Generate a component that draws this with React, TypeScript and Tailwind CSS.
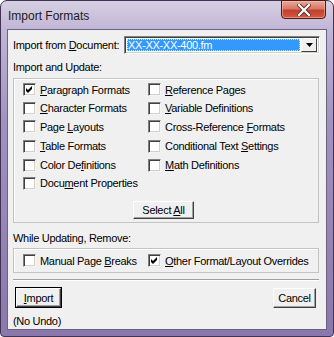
import React from "react";

const Cb = ({ checked = false }: { checked?: boolean }) => (
  <span className="w-[13px] h-[13px] shrink-0 border border-t-[#808080] border-l-[#808080] border-b-[#f4f4f4] border-r-[#f4f4f4] bg-white shadow-[inset_1px_1px_0_#404040,inset_-1px_-1px_0_#d4d0c8] flex items-center justify-center">
    {checked && (
      <svg width="9" height="9" viewBox="0 0 9 9">
        <polygon points="1,3 3,5 7,1 7,4 3,8 1,6" fill="#000" />
      </svg>
    )}
  </span>
);

const U = ({ children }: { children: React.ReactNode }) => <span className="underline underline-offset-[1px]">{children}</span>;

const Row = ({ h, left, right }: { h: string; left: React.ReactNode; right?: React.ReactNode }) => (
  <div className={`flex items-center ${h}`}>
    <div className="w-[125px] flex items-center">{left}</div>
    {right && <div className="flex items-center">{right}</div>}
  </div>
);

const Item = ({ checked, children }: { checked?: boolean; children: React.ReactNode }) => (
  <>
    <Cb checked={checked} />
    <span className="ml-[4px] whitespace-nowrap leading-[12px]">{children}</span>
  </>
);

const Btn = ({ children, className = "" }: { children: React.ReactNode; className?: string }) => (
  <div
    className={`flex items-center justify-center bg-[#f0f0f0] border border-t-white border-l-white border-b-[#404040] border-r-[#404040] shadow-[inset_-1px_-1px_0_#a0a0a0] leading-[12px] ${className}`}
  >
    <span className="whitespace-nowrap">{children}</span>
  </div>
);

export default function App() {
  return (
    <div
      className="w-[334px] h-[337px] rounded-t-[7px] rounded-b-[4px] border border-[#3f3456] bg-[linear-gradient(180deg,#d7d0e2_0px,#c2b6d6_28px,#a292bf_120px,#8a77ab_337px)] text-black"
      style={{ fontFamily: '"Liberation Sans", Arial, sans-serif' }}
    >
      <div className="px-[6px] pb-[6px] flex flex-col h-full">
        <div className="h-[28px] flex items-start justify-between">
          <span className="pl-[1px] mt-[9px] text-[12px] leading-[13px] text-[#1b1b1b]">Import Formats</span>
          <div className="w-[45px] h-[19px] mt-[-1px] mr-[1px] rounded-b-[4px] border border-[#4a1c16] bg-[linear-gradient(180deg,#e9a99b_0%,#d8786a_45%,#c2412d_55%,#d25a3e_100%)] shadow-[inset_0_0_0_1px_rgba(255,200,190,0.5)] flex items-center justify-center">
            <svg width="14" height="12" viewBox="0 0 14 12">
              <path d="M2 1 L12 11 M12 1 L2 11" stroke="#5a2a24" strokeWidth="4" strokeLinecap="square" />
              <path d="M2 1 L12 11 M12 1 L2 11" stroke="#ffffff" strokeWidth="2.2" strokeLinecap="square" />
            </svg>
          </div>
        </div>
        <div
          className="flex-1 border border-[#6b6180] bg-[#f0f0f0] pl-[5px] flex flex-col text-[11px] tracking-[-0.3px]"
        >
          <div className="mt-[6px] h-[18px] w-[307px] flex items-center justify-between">
            <span className="leading-[12px]">
              Import from <U>D</U>ocument:
            </span>
            <div className="w-[196px] h-[18px] border border-t-[#808080] border-l-[#808080] border-b-white border-r-white shadow-[inset_1px_1px_0_#404040,inset_-1px_-1px_0_#d4d0c8] bg-white flex items-center p-[2px]">
              <div className="flex-1 h-full bg-[#3399ff] outline outline-1 outline-dotted outline-[#ffe08a] -outline-offset-1 text-white flex items-center pl-[1px] leading-[12px]">
                XX-XX-XX-400.fm
              </div>
              <div className="w-[16px] h-[14px] ml-[1px] bg-[#f0f0f0] border border-t-white border-l-white border-b-[#404040] border-r-[#404040] flex items-center justify-center">
                <svg width="7" height="4" viewBox="0 0 7 4">
                  <polygon points="0,0 7,0 3.5,4" fill="#000" />
                </svg>
              </div>
            </div>
          </div>

          <div className="mt-[7px] leading-[12px]">Import and Update:</div>

          <div className="mt-[5px] w-[306px] h-[145px] border border-[#c4c4c4] shadow-[inset_1px_1px_0_#ffffff] pl-[9px] pt-[1px] flex flex-col">
            <Row h="h-[19px]" left={<Item checked><U>P</U>aragraph Formats</Item>} right={<Item><U>R</U>eference Pages</Item>} />
            <Row h="h-[18px]" left={<Item><U>C</U>haracter Formats</Item>} right={<Item><U>V</U>ariable Definitions</Item>} />
            <Row h="h-[19px]" left={<Item>Page <U>L</U>ayouts</Item>} right={<Item>Cross-Reference <U>F</U>ormats</Item>} />
            <Row h="h-[20px]" left={<Item><U>T</U>able Formats</Item>} right={<Item>Conditional Text <U>S</U>ettings</Item>} />
            <Row h="h-[18px]" left={<Item>Color De<U>f</U>initions</Item>} right={<Item><U>M</U>ath Definitions</Item>} />
            <Row h="h-[18px]" left={<Item>Docu<U>m</U>ent Properties</Item>} />
            <div className="mt-[9px] ml-[110px]">
              <Btn className="w-[61px] h-[18px]">
                Select <U>A</U>ll
              </Btn>
            </div>
          </div>

          <div className="mt-[9px] leading-[12px]">While Updating, Remove:</div>

          <div className="mt-[4px] w-[306px] h-[25px] border border-[#c4c4c4] shadow-[inset_1px_1px_0_#ffffff] pl-[9px] flex items-center">
            <div className="w-[125px] flex items-center">
              <Item>Manual Page <U>B</U>reaks</Item>
            </div>
            <div className="flex items-center">
              <Item checked><U>O</U>ther Format/Layout Overrides</Item>
            </div>
          </div>

          <div className="mt-[6px] w-[306px] h-[2px] border-t border-[#a0a0a0] border-b border-b-white" />

          <div className="mt-[6px] w-[303px] flex justify-between">
            <div className="w-[47px] h-[21px] border border-black ml-[2px]">
              <Btn className="w-full h-full">
                <U>I</U>mport
              </Btn>
            </div>
            <Btn className="w-[43px] h-[20px] mt-[1px]">Cancel</Btn>
          </div>

          <div className="mt-[7px] leading-[12px]">(No Undo)</div>
        </div>
      </div>
    </div>
  );
}
